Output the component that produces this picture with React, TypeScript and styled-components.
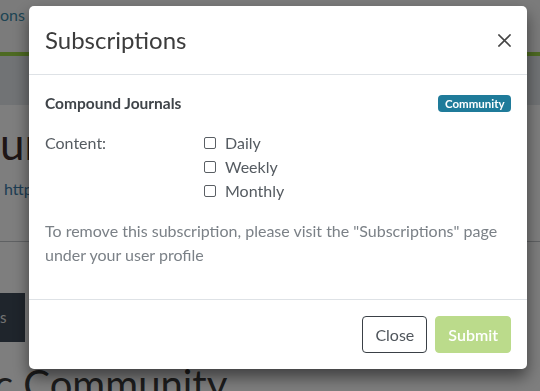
import React from "react";
import styled, { createGlobalStyle } from "styled-components";

const Global = createGlobalStyle`
  html, body { margin: 0; padding: 0; }
  body {
    font-family: "Lato", "Noto Sans", sans-serif;
    background: #ffffff;
    width: 540px;
    height: 391px;
    overflow: hidden;
  }
  * { box-sizing: border-box; }
`;

const Page = styled.div`
  width: 540px;
  height: 391px;
  overflow: hidden;
  background: #fafafa;
  display: flex;
  flex-direction: column;
  & > * { flex-shrink: 0; }
`;

const TopBar = styled.div`
  height: 52px;
  background: #f7f7f7;
  padding-top: 3px;
  font-size: 16px;
  line-height: 24px;
`;

const NavLink = styled.a`
  color: #3d8aa8;
  text-decoration: none;
`;

const GreenRule = styled.div`
  height: 4px;
  background: #9bd445;
`;

const SubNav = styled.div`
  height: 49px;
  background: #e2e6ea;
`;

const Main = styled.div`
  display: flex;
  flex-direction: column;
  align-items: flex-start;
  background: #fcfcfd;
  flex: 1 0 auto;
  & > * { flex-shrink: 0; }
`;

const Heading = styled.h1`
  margin: 12px 0 0 0;
  font-size: 44px;
  font-weight: 400;
  line-height: 52px;
  color: #3e2c2c;
`;

const UrlLink = styled.a`
  margin-top: 8px;
  font-size: 16px;
  line-height: 24px;
  color: #3a7aa6;
  padding-left: 4px;
  text-decoration: none;
`;

const Rule = styled.hr`
  align-self: stretch;
  margin: 40px 0 0 0;
  border: 0;
  border-top: 1px solid #bfc3c7;
`;

const DarkTab = styled.div`
  margin-top: 51px;
  width: 25px;
  height: 49px;
  background: #3e4a58;
  color: #e6e6e6;
  font-size: 15px;
  line-height: 49px;
  overflow: hidden;
  white-space: nowrap;
`;

const Community = styled.h2`
  margin: 18px 0 0 -6px;
  font-size: 40px;
  font-weight: 400;
  line-height: 48px;
  color: #3a3a3a;
  white-space: nowrap;
`;

const Backdrop = styled.div`
  position: fixed;
  inset: 0;
  background: rgba(0, 0, 0, 0.5);
  padding: 6px 13px 0 29px;
`;

const Dialog = styled.div`
  width: 498px;
  background: #ffffff;
  border-radius: 5px;
  box-shadow: 0 8px 16px rgba(0, 0, 0, 0.5);
  display: flex;
  flex-direction: column;
`;

const Header = styled.div`
  display: flex;
  align-items: center;
  justify-content: space-between;
  padding: 16px;
  border-bottom: 1px solid #dee2e6;
`;

const Title = styled.h5`
  margin: 0;
  font-size: 24px;
  font-weight: 400;
  line-height: 36px;
  color: #3c3c3c;
`;

const CloseX = styled.button`
  border: 0;
  background: transparent;
  padding: 0;
  width: 13px;
  height: 13px;
  display: flex;
  cursor: pointer;
`;

const Body = styled.div`
  padding: 16px;
  color: #555b61;
  font-size: 16px;
  line-height: 24px;
`;

const JournalRow = styled.div`
  display: flex;
  align-items: center;
  justify-content: space-between;
`;

const JournalName = styled.div`
  font-weight: 700;
  color: #3f4449;
  font-size: 15.5px;
`;

const Badge = styled.span`
  background: #1f7b9a;
  color: #ffffff;
  font-weight: 700;
  font-size: 11.5px;
  line-height: 17px;
  height: 17px;
  padding: 0 6.5px;
  border-radius: 4px;
`;

const ContentGrid = styled.div`
  display: grid;
  grid-template-columns: 159px 1fr;
  margin-top: 16px;
`;

const Options = styled.div`
  display: flex;
  flex-direction: column;
`;

const Option = styled.label`
  display: flex;
  align-items: center;
  gap: 9px;
  height: 24px;
`;

const Box = styled.input`
  appearance: none;
  margin: 0;
  width: 12px;
  height: 12px;
  border: 1px solid #5a5f64;
  border-radius: 2px;
  background: #ffffff;
`;

const Notice = styled.p`
  margin: 16px 0 16px 0;
  color: #7b8187;
`;

const Footer = styled.div`
  display: flex;
  justify-content: flex-end;
  gap: 8px;
  padding: 16px;
  border-top: 1px solid #dee2e6;
`;

const Button = styled.button<{ $variant: "outline" | "primary" }>`
  font-family: inherit;
  font-size: 16px;
  line-height: 24px;
  height: 37px;
  padding: 6px 12px;
  border-radius: 4px;
  border: 1px solid ${(p) => (p.$variant === "outline" ? "#3a4046" : "#bbdb8b")};
  background: ${(p) => (p.$variant === "outline" ? "#ffffff" : "#bbdb8b")};
  color: ${(p) => (p.$variant === "outline" ? "#50565c" : "#ffffff")};
  font-weight: ${(p) => (p.$variant === "outline" ? 400 : 600)};
`;

export default function App() {
  return (
    <>
      <Global />
      <Page>
        <TopBar>
          <NavLink href="#">ons</NavLink>
        </TopBar>
        <GreenRule />
        <SubNav />
        <Main>
          <Heading>ur</Heading>
          <UrlLink href="#">http</UrlLink>
          <Rule />
          <DarkTab>s</DarkTab>
          <Community>c Community</Community>
        </Main>
      </Page>
      <Backdrop>
        <Dialog role="dialog">
          <Header>
            <Title>Subscriptions</Title>
            <CloseX aria-label="Close">
              <svg width="13" height="13" viewBox="0 0 13 13">
                <path d="M1 1 L12 12 M12 1 L1 12" stroke="#454545" strokeWidth="1.6" strokeLinecap="square" />
              </svg>
            </CloseX>
          </Header>
          <Body>
            <JournalRow>
              <JournalName>Compound Journals</JournalName>
              <Badge>Community</Badge>
            </JournalRow>
            <ContentGrid>
              <div>Content:</div>
              <Options>
                <Option><Box type="checkbox" />Daily</Option>
                <Option><Box type="checkbox" />Weekly</Option>
                <Option><Box type="checkbox" />Monthly</Option>
              </Options>
            </ContentGrid>
            <Notice>
              To remove this subscription, please visit the "Subscriptions" page under your user profile
            </Notice>
          </Body>
          <Footer>
            <Button $variant="outline">Close</Button>
            <Button $variant="primary" disabled>Submit</Button>
          </Footer>
        </Dialog>
      </Backdrop>
    </>
  );
}
